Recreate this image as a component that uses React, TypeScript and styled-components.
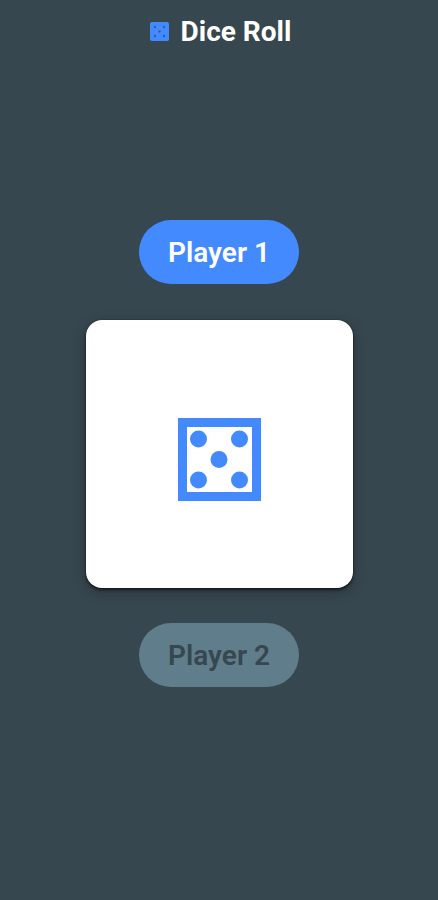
import styled, { createGlobalStyle } from 'styled-components'

const GlobalStyle = createGlobalStyle`
  html, body {
    margin: 0;
    padding: 0;
    background: #37474f;
  }
  * {
    box-sizing: border-box;
  }
`

const Screen = styled.div`
  display: flex;
  flex-flow: column nowrap;
  align-items: center;
  width: 100%;
  height: 900px;
  overflow: hidden;
  background: #37474f;
  font-family: Roboto, "Liberation Sans", sans-serif;
`

const TitleBar = styled.header`
  display: flex;
  align-items: center;
  justify-content: center;
  gap: 12px;
  width: 100%;
  height: 62px;
  padding-left: 3px;
  color: #ffffff;
  font-size: 28px;
  font-weight: 700;
`

const Board = styled.main`
  display: flex;
  flex-flow: column nowrap;
  align-items: center;
  gap: 36px;
  padding-top: 158px;
`

const PlayerPill = styled.div<{ $active: boolean }>`
  display: flex;
  align-items: center;
  justify-content: center;
  width: 160px;
  height: 64px;
  margin-top: ${(p) => (p.$active ? '0' : '-1px')};
  border-radius: 32px;
  font-size: 28px;
  font-weight: 600;
  background: ${(p) => (p.$active ? '#448aff' : '#607d8b')};
  color: ${(p) => (p.$active ? '#ffffff' : '#37474f')};
`

const DiceCard = styled.div`
  display: flex;
  align-items: center;
  justify-content: center;
  width: 267px;
  height: 268px;
  padding-top: 11px;
  border-radius: 16px;
  background: #ffffff;
  box-shadow: 0 0 1px rgba(0, 0, 0, 0.8), 0 2px 3px rgba(0, 0, 0, 0.55), 0 4px 14px rgba(0, 0, 0, 0.25);
`

const DiceFive = ({ size }: { size: number }) => (
  <svg width={size} height={size} viewBox="0 0 83 83" aria-hidden="true">
    <path
      fill="#448aff"
      fillRule="evenodd"
      d="M0 0H83V83H0ZM9 9V74H74V9Z"
    />
    <circle cx="20.5" cy="21" r="8.5" fill="#448aff" />
    <circle cx="61.5" cy="21" r="8.5" fill="#448aff" />
    <circle cx="41" cy="41.5" r="8.5" fill="#448aff" />
    <circle cx="20.5" cy="62" r="8.5" fill="#448aff" />
    <circle cx="61.5" cy="62" r="8.5" fill="#448aff" />
  </svg>
)

const TitleIcon = () => (
  <svg width="19" height="19" viewBox="0 0 19 19" aria-hidden="true">
    <rect width="19" height="19" rx="2" fill="#448aff" />
    <circle cx="5" cy="5" r="1.2" fill="#2a5fb5" />
    <circle cx="14" cy="5" r="1.2" fill="#2a5fb5" />
    <circle cx="9.5" cy="9.5" r="1.2" fill="#2a5fb5" />
    <circle cx="5" cy="14" r="1.2" fill="#2a5fb5" />
    <circle cx="14" cy="14" r="1.2" fill="#2a5fb5" />
  </svg>
)

const App = () => {
  return (
    <>
      <GlobalStyle />
      <Screen>
        <TitleBar>
          <TitleIcon />
          Dice Roll
        </TitleBar>
        <Board>
          <PlayerPill $active>Player 1</PlayerPill>
          <DiceCard>
            <DiceFive size={83} />
          </DiceCard>
          <PlayerPill $active={false}>Player 2</PlayerPill>
        </Board>
      </Screen>
    </>
  )
}

export default App
